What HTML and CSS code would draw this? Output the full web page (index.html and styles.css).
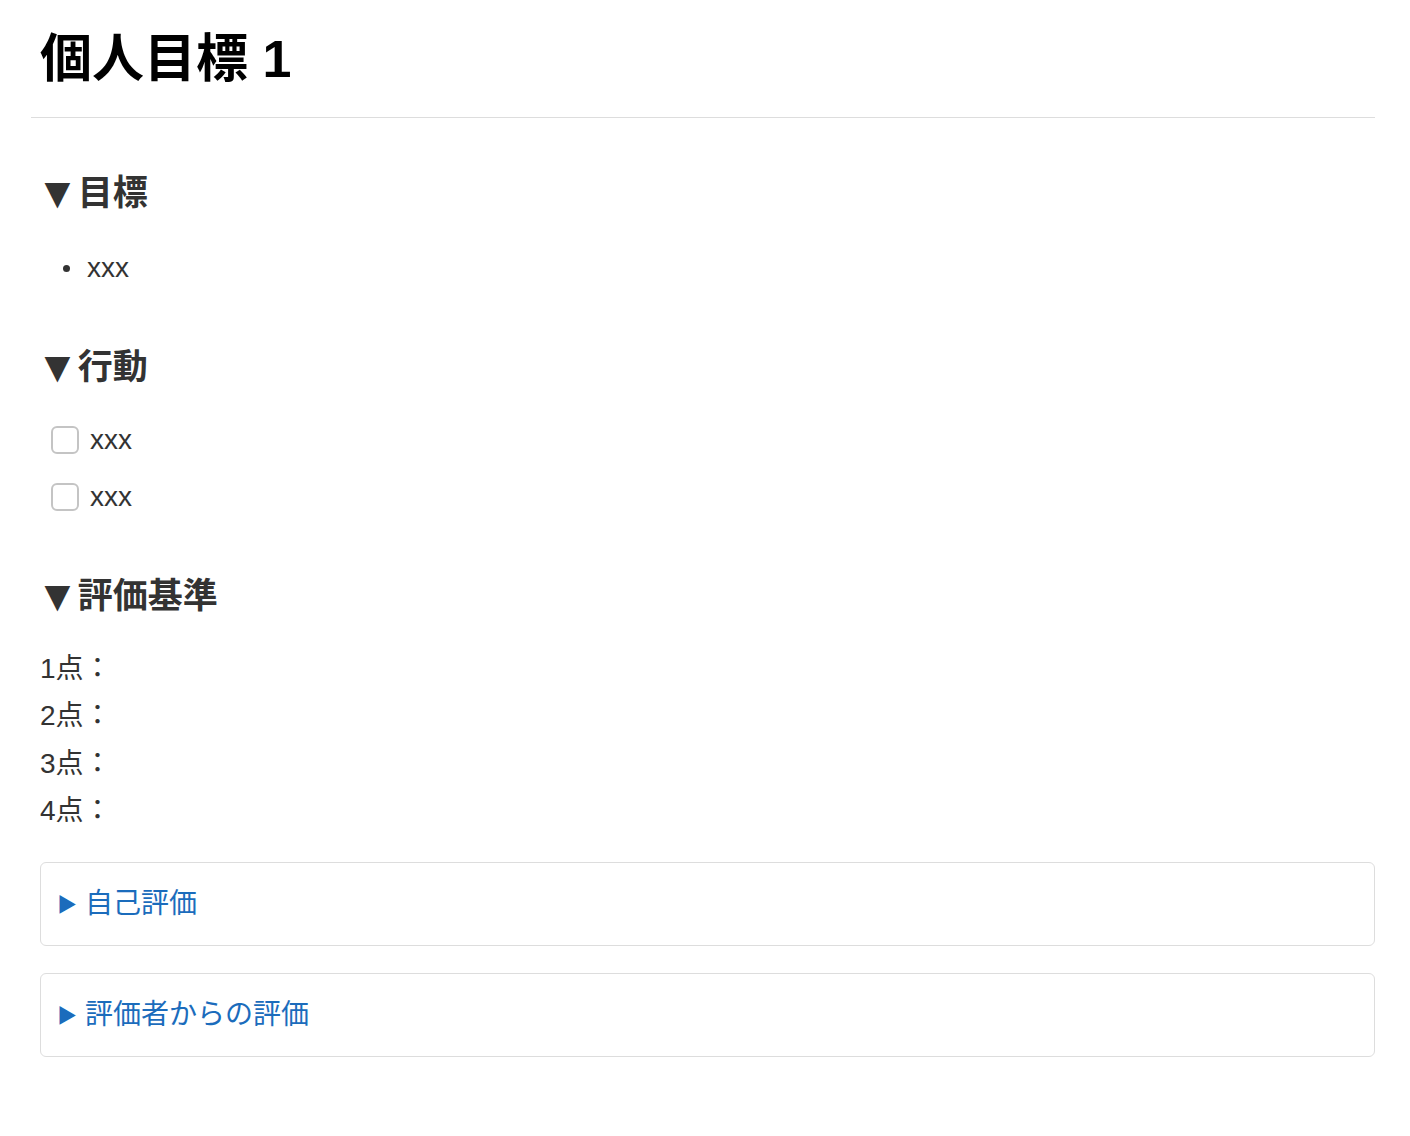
FILE: index.html
```html
<!DOCTYPE html>
<html lang="ja">
<head>
<meta charset="utf-8">
<title>個人目標 1</title>
<link rel="stylesheet" href="styles.css">
</head>
<body>
<main class="doc">
  <h1 class="doc-title">個人目標 1</h1>

  <section class="sec">
    <h2 class="sec-head"><span class="tri">▼</span>目標</h2>
    <ul class="bullets">
      <li>xxx</li>
    </ul>
  </section>

  <section class="sec">
    <h2 class="sec-head"><span class="tri">▼</span>行動</h2>
    <ul class="tasks">
      <li><span class="box"></span>xxx</li>
      <li><span class="box"></span>xxx</li>
    </ul>
  </section>

  <section class="sec">
    <h2 class="sec-head"><span class="tri">▼</span>評価基準</h2>
    <p class="scores">1点：<br>2点：<br>3点：<br>4点：</p>
  </section>

  <details class="fold">
    <summary><span class="arrow">▶</span>自己評価</summary>
  </details>
  <details class="fold">
    <summary><span class="arrow">▶</span>評価者からの評価</summary>
  </details>
</main>
</body>
</html>
```

FILE: styles.css
```css
html, body {
  margin: 0;
  padding: 0;
  background: #fff;
}

body {
  font-family: "Liberation Sans", "Noto Sans CJK JP", sans-serif;
  font-size: 28px;
  line-height: 1.7;
  color: #333;
}

.doc {
  width: 1335px;
  margin-left: 40px;
  padding-top: 26px;
}

.doc-title {
  margin: 0 0 0 -9px;
  padding: 0 0 24px 9px;
  font-size: 52px;
  line-height: 67px;
  font-weight: 700;
  color: #000;
  border-bottom: 1px solid #ddd;
}

.sec-head {
  margin: 50px 0 0 0;
  font-size: 35px;
  line-height: 49px;
  font-weight: 700;
  color: #333;
}

/* the disclosure triangle is drawn a little larger than the heading text */
.tri {
  display: inline-block;
  transform: scale(1.25);
  margin-right: 3px;
}

.bullets {
  list-style: none;
  margin: 27px 0 0 0;
  padding: 0 0 0 47px;
}

.bullets li {
  position: relative;
}

.bullets li::before {
  content: "";
  position: absolute;
  left: -24px;
  top: 21px;
  width: 7px;
  height: 7px;
  border-radius: 50%;
  background: #333;
}

.tasks {
  list-style: none;
  margin: 25px 0 0 0;
  padding: 0 0 0 11px;
}

.tasks li {
  display: flex;
  align-items: center;
  height: 48px;
  margin-bottom: 9px;
}

.tasks li:last-child {
  margin-bottom: 0;
}

.box {
  box-sizing: border-box;
  width: 28px;
  height: 28px;
  border: 2px solid #c4c4c4;
  border-radius: 6px;
  margin-right: 11px;
  flex: none;
}

.scores {
  margin: 25px 0 0 0;
  line-height: 47.5px;
}

.fold {
  box-sizing: border-box;
  border: 1px solid #ddd;
  border-radius: 6px;
  margin-top: 27px;
  padding: 17px 19px;
}

.fold + .fold {
  margin-top: 27px;
}

.fold summary {
  list-style: none;
  color: #1b6cbc;
  line-height: 48px;
  cursor: pointer;
}

.fold summary::-webkit-details-marker {
  display: none;
}

.arrow {
  font-size: 20px;
  line-height: 0;
  margin-left: -3px;
  margin-right: 8px;
  vertical-align: 1px;
}
```
